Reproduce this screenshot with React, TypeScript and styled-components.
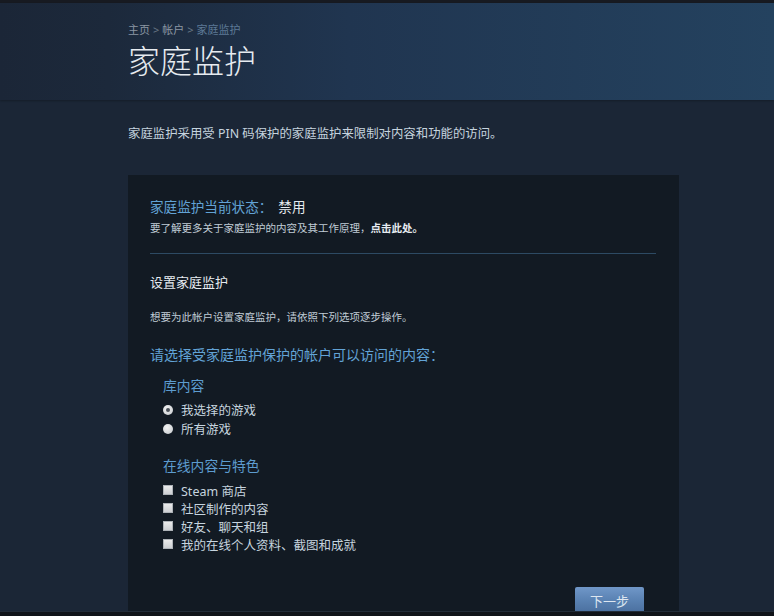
import React, { useState } from "react";
import styled, { createGlobalStyle } from "styled-components";

const GlobalStyle = createGlobalStyle`
    html, body {
        margin: 0;
        padding: 0;
        background: #1b2636;
        height: 616px;
        overflow: hidden;
    }

    body {
        font-family: "Noto Sans", "Noto Sans CJK SC", sans-serif;
        color: #c6d4df;
    }
`;

const Page = styled.div`
    display: flex;
    flex-direction: column;
    height: 616px;
    border-top: 3px solid #171a21;
    box-sizing: border-box;
`;

const Header = styled.header`
    flex-shrink: 0;
    height: 97px;
    padding: 20px 0 0 128px;
    box-sizing: border-box;
    background: linear-gradient(
        90deg,
        #1b2637 0%,
        #1c293b 14%,
        #203550 45%,
        #24425f 100%
    );
    box-shadow: 0 1px 2px rgba(0, 0, 0, 0.25);
`;

const Breadcrumbs = styled.div`
    font-size: 11px;
    line-height: 13px;
    color: #8b96a3;

    .sep {
        color: #6a7886;
        margin: 0 3px;
    }

    .current {
        color: #5d7a96;
    }
`;

const Title = styled.h1`
    margin: 7px 0 0;
    font-size: 32px;
    line-height: 32px;
    font-weight: 300;
    color: #e6ebf0;
    font-family: "Noto Sans CJK SC", sans-serif;
`;

const Main = styled.main`
    flex: 1;
    min-height: 0;
    padding: 26px 0 0 128px;
    display: flex;
    flex-direction: column;
`;

const Intro = styled.p`
    margin: 0;
    font-size: 12.4px;
    line-height: 16px;
    color: #c6d4df;
`;

const Card = styled.section`
    margin-top: 33px;
    width: 551px;
    flex: 1;
    min-height: 0;
    background: #121a23;
    padding: 23px 23px 0 22px;
    box-sizing: border-box;
    display: flex;
    flex-direction: column;
    overflow: hidden;
`;

const StatusLine = styled.div`
    font-size: 13.6px;
    line-height: 18px;
    color: #62a3d6;

    .value {
        color: #e6ebf0;
        margin-left: 6px;
    }
`;

const Small = styled.p<{ $gap: number }>`
    margin: ${({ $gap }) => $gap}px 0 0;
    font-size: 10.5px;
    line-height: 14px;
    color: #c0ccd6;

    b {
        color: #e6ebf0;
        font-weight: 700;
    }
`;

const Divider = styled.hr`
    flex-shrink: 0;
    margin: 18px 0 0;
    border: 0;
    height: 1px;
    background: #2d4a63;
`;

const SectionTitle = styled.h2`
    margin: 19px 0 0;
    font-size: 13px;
    line-height: 18px;
    font-weight: 400;
    color: #e6ebf0;
`;

const Question = styled.h3`
    margin: 21px 0 0;
    font-size: 14px;
    line-height: 20px;
    font-weight: 400;
    color: #62a3d6;
`;

const Group = styled.div<{ $gap: number }>`
    margin-top: ${({ $gap }) => $gap}px;
    padding-left: 13px;
`;

const GroupTitle = styled.div`
    font-size: 13.8px;
    line-height: 18px;
    color: #5d9ccf;
`;

const OptionList = styled.ul<{ $gap: number; $row: number }>`
    list-style: none;
    margin: ${({ $gap }) => $gap}px 0 0;
    padding: 0;

    li {
        display: flex;
        align-items: center;
        gap: 8px;
        height: ${({ $row }) => $row}px;
        font-size: 12.5px;
        color: #c6d4df;
        cursor: pointer;
    }
`;

const RadioMark = styled.span<{ $checked: boolean }>`
    width: 10px;
    height: 10px;
    border-radius: 50%;
    background: radial-gradient(circle at 40% 35%, #f2f2f2, #c4c8cc);
    display: flex;
    align-items: center;
    justify-content: center;

    &::after {
        content: "";
        width: 4px;
        height: 4px;
        border-radius: 50%;
        background: #4a5058;
        display: ${({ $checked }) => ($checked ? "block" : "none")};
    }
`;

const CheckMark = styled.span<{ $checked: boolean }>`
    width: 10px;
    height: 10px;
    border-radius: 1px;
    background: linear-gradient(180deg, #eeeeee, #c9ccd0);
    box-shadow: inset 0 0 0 1px #aeb3b8;
    position: relative;

    &::after {
        content: "";
        position: absolute;
        left: 3px;
        top: 1px;
        width: 3px;
        height: 5px;
        border: solid #2b3038;
        border-width: 0 2px 2px 0;
        transform: rotate(45deg);
        display: ${({ $checked }) => ($checked ? "block" : "none")};
    }
`;

const Footer = styled.div`
    flex-shrink: 0;
    margin-top: 34px;
    display: flex;
    justify-content: flex-end;
    padding-right: 12px;
`;

const NextButton = styled.button`
    flex-shrink: 0;
    width: 69px;
    height: 26px;
    border: 0;
    border-radius: 2px;
    background: linear-gradient(180deg, #7097c8 0%, #5a82b3 50%, #4a6f9e 100%);
    color: #dde6f0;
    font-family: "Noto Sans CJK SC", sans-serif;
    font-size: 13px;
    cursor: pointer;
    padding: 0;
`;

const BottomBar = styled.div`
    flex-shrink: 0;
    height: 4px;
    background: #101419;
    border-top: 1px solid #222c38;
`;

const libraryOptions = ["我选择的游戏", "所有游戏"];
const onlineOptions = [
    "Steam 商店",
    "社区制作的内容",
    "好友、聊天和组",
    "我的在线个人资料、截图和成就",
];

export default function App() {
    const [library, setLibrary] = useState(libraryOptions[0]);
    const [online, setOnline] = useState<string[]>([]);

    const toggle = (name: string) =>
        setOnline((prev) =>
            prev.includes(name)
                ? prev.filter((item) => item !== name)
                : [...prev, name]
        );

    return (
        <>
            <GlobalStyle />
            <Page>
                <Header>
                    <Breadcrumbs>
                        主页<span className="sep">&gt;</span>帐户
                        <span className="sep">&gt;</span>
                        <span className="current">家庭监护</span>
                    </Breadcrumbs>
                    <Title>家庭监护</Title>
                </Header>
                <Main>
                    <Intro>
                        家庭监护采用受 PIN 码保护的家庭监护来限制对内容和功能的访问。
                    </Intro>
                    <Card>
                        <StatusLine>
                            家庭监护当前状态：<span className="value">禁用</span>
                        </StatusLine>
                        <Small $gap={5}>
                            要了解更多关于家庭监护的内容及其工作原理，<b>点击此处。</b>
                        </Small>
                        <Divider />
                        <SectionTitle>设置家庭监护</SectionTitle>
                        <Small $gap={19}>
                            想要为此帐户设置家庭监护，请依照下列选项逐步操作。
                        </Small>
                        <Question>请选择受家庭监护保护的帐户可以访问的内容：</Question>
                        <Group $gap={12}>
                            <GroupTitle>库内容</GroupTitle>
                            <OptionList $gap={5} $row={19}>
                                {libraryOptions.map((name) => (
                                    <li key={name} onClick={() => setLibrary(name)}>
                                        <RadioMark $checked={library === name} />
                                        {name}
                                    </li>
                                ))}
                            </OptionList>
                        </Group>
                        <Group $gap={19}>
                            <GroupTitle>在线内容与特色</GroupTitle>
                            <OptionList $gap={6} $row={18}>
                                {onlineOptions.map((name) => (
                                    <li key={name} onClick={() => toggle(name)}>
                                        <CheckMark $checked={online.includes(name)} />
                                        {name}
                                    </li>
                                ))}
                            </OptionList>
                        </Group>
                        <Footer>
                            <NextButton>下一步</NextButton>
                        </Footer>
                    </Card>
                </Main>
                <BottomBar />
            </Page>
        </>
    );
}
